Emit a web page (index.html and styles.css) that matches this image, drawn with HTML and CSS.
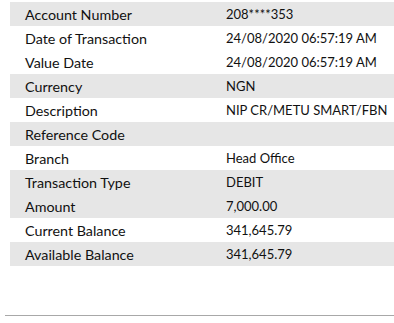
FILE: index.html
```html
<!DOCTYPE html>
<html>
<head>
<meta charset="utf-8">
<link rel="stylesheet" href="styles.css">
</head>
<body>
<div class="page">
  <div class="table">
    <div class="row shade"><span class="label">Account Number</span><span class="value">208****353</span></div>
    <div class="row"><span class="label">Date of Transaction</span><span class="value">24/08/2020 06:57:19 AM</span></div>
    <div class="row"><span class="label">Value Date</span><span class="value">24/08/2020 06:57:19 AM</span></div>
    <div class="row shade"><span class="label">Currency</span><span class="value">NGN</span></div>
    <div class="row"><span class="label">Description</span><span class="value">NIP CR/METU SMART/FBN</span></div>
    <div class="row shade"><span class="label">Reference Code</span><span class="value"></span></div>
    <div class="row"><span class="label">Branch</span><span class="value">Head Office</span></div>
    <div class="row shade"><span class="label">Transaction Type</span><span class="value">DEBIT</span></div>
    <div class="row shade"><span class="label">Amount</span><span class="value">7,000.00</span></div>
    <div class="row"><span class="label">Current Balance</span><span class="value">341,645.79</span></div>
    <div class="row shade"><span class="label">Available Balance</span><span class="value">341,645.79</span></div>
  </div>
  <div class="rule"></div>
</div>
</body>
</html>
```
FILE: styles.css
```css
html, body {
  margin: 0;
  padding: 0;
  background: #ffffff;
}
.page {
  width: 394px;
  height: 323px;
  padding-top: 2px;
  box-sizing: border-box;
  font-family: "Lato", "Open Sans", sans-serif;
  font-size: 14px;
  color: #111111;
}
.table {
  margin-left: 10px;
  display: flex;
  flex-direction: column;
}
.row {
  height: 24px;
  display: grid;
  grid-template-columns: 216px 1fr;
  align-items: center;
  white-space: nowrap;
}
.row.shade {
  background: #e6e6e6;
}
.label {
  padding-left: 15px;
  font-size: 14.3px;
}
.value {
  font-size: 13px;
}
.rule {
  margin-top: 49px;
  margin-left: 5px;
  height: 1px;
  background: #a8a8a8;
}
```
